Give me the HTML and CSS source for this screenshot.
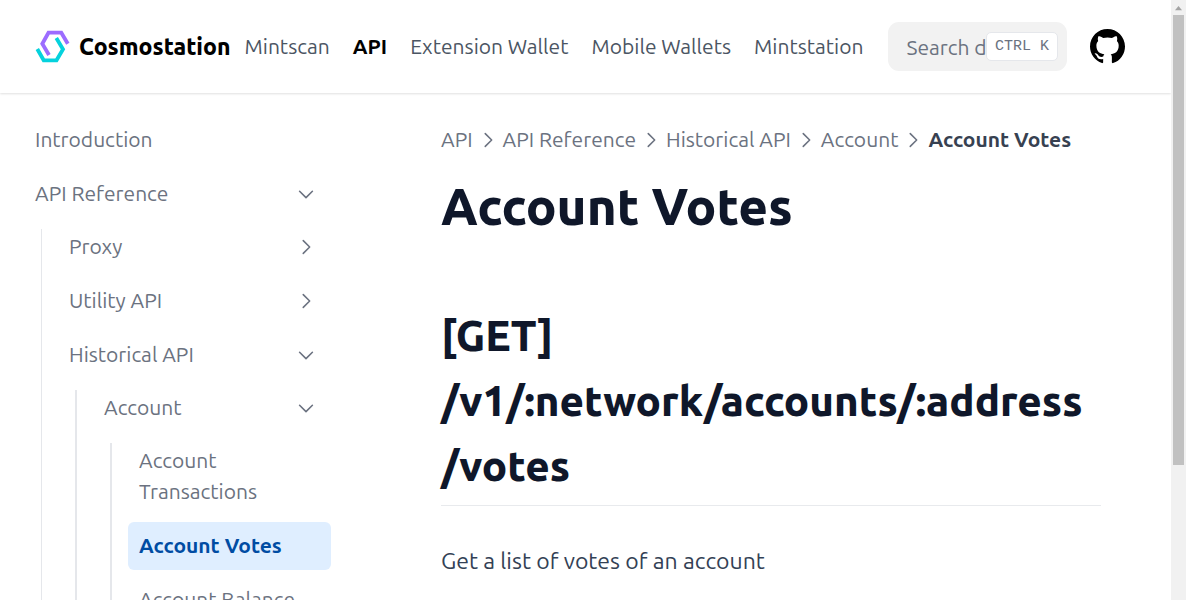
FILE: index.html
```html
<!DOCTYPE html>
<html lang="en">
<head>
<meta charset="utf-8">
<title>Account Votes – Cosmostation</title>
<link rel="stylesheet" href="styles.css">
</head>
<body>
<svg class="defs" aria-hidden="true">
  <symbol id="chevron" viewBox="0 0 24 24"><path d="M9 5l7 7-7 7" fill="none" stroke="currentColor" stroke-width="1.700" stroke-linecap="round" stroke-linejoin="round"/></symbol>
</svg>
<div class="page">
  <header class="header">
    <a class="brand" href="#">
      <svg class="brand-mark" viewBox="0 0 36 34" aria-hidden="true">
        <g fill="none" stroke-width="3.800">
          <path d="M32.800 13.700L26.300 2.700H13.500L7.300 13.700L14 25" stroke="#9c6cff"/>
          <path d="M2.300 19L8.700 30.300H21.500L28 19.200L21.300 8" stroke="#05d2dd"/>
        </g>
      </svg>
      <span>Cosmostation</span>
    </a>
    <nav class="nav" aria-label="Main">
      <a href="#">Mintscan</a>
      <a href="#" class="current" aria-current="true">API</a>
      <a href="#">Extension Wallet</a>
      <a href="#">Mobile Wallets</a>
      <a href="#">Mintstation</a>
    </nav>
    <div class="search">
      <input class="search-input" type="search" placeholder="Search documentation…" aria-label="Search documentation">
      <kbd class="search-key">CTRL K</kbd>
    </div>
    <a class="github" href="#" aria-label="GitHub">
      <svg viewBox="0 0 16 16" aria-hidden="true"><path d="M8 0C3.580 0 0 3.580 0 8c0 3.540 2.290 6.530 5.470 7.590.4.070.55-.17.55-.38 0-.19-.01-.82-.01-1.490-2.010.37-2.530-.49-2.690-.94-.09-.23-.48-.94-.82-1.130-.28-.15-.68-.52-.01-.53.63-.01 1.080.58 1.230.82.72 1.210 1.870.87 2.330.66.07-.52.28-.87.51-1.070-1.780-.2-3.640-.89-3.640-3.950 0-.87.31-1.590.82-2.150-.08-.2-.36-1.020.08-2.120 0 0 .67-.21 2.200.82.64-.18 1.320-.27 2-.27s1.360.09 2 .27c1.530-1.040 2.200-.82 2.200-.82.44 1.100.16 1.920.08 2.120.51.56.82 1.270.82 2.150 0 3.070-1.870 3.750-3.650 3.950.29.25.54.73.54 1.480 0 1.070-.01 1.930-.01 2.200 0 .21.15.46.55.38A8.010 8.010 0 0 0 16 8c0-4.420-3.580-8-8-8z"/></svg>
    </a>
  </header>
  <div class="columns">
    <aside class="sidebar">
      <ul class="menu">
        <li><a class="item" href="#">Introduction</a></li>
        <li>
          <button class="item" type="button" aria-expanded="true">API Reference<svg class="chevron open"><use href="#chevron"/></svg></button>
          <ul class="menu sub">
            <li><button class="item" type="button" aria-expanded="false">Proxy<svg class="chevron"><use href="#chevron"/></svg></button></li>
            <li><button class="item" type="button" aria-expanded="false">Utility API<svg class="chevron"><use href="#chevron"/></svg></button></li>
            <li>
              <button class="item" type="button" aria-expanded="true">Historical API<svg class="chevron open"><use href="#chevron"/></svg></button>
              <ul class="menu sub deep">
                <li>
                  <button class="item" type="button" aria-expanded="true">Account<svg class="chevron open"><use href="#chevron"/></svg></button>
                  <ul class="menu sub deep">
                    <li><a class="item" href="#">Account Transactions</a></li>
                    <li><a class="item active" href="#" aria-current="page">Account Votes</a></li>
                    <li><a class="item" href="#">Account Balance</a></li>
                  </ul>
                </li>
              </ul>
            </li>
          </ul>
        </li>
      </ul>
    </aside>
    <main class="content">
      <nav class="crumbs" aria-label="Breadcrumb">
        <a href="#">API</a>
        <svg class="chevron"><use href="#chevron"/></svg>
        <a href="#">API Reference</a>
        <svg class="chevron"><use href="#chevron"/></svg>
        <a href="#">Historical API</a>
        <svg class="chevron"><use href="#chevron"/></svg>
        <a href="#">Account</a>
        <svg class="chevron"><use href="#chevron"/></svg>
        <span class="here">Account Votes</span>
      </nav>
      <h1>Account Votes</h1>
      <h2>[GET] <span class="path">/v1/:network/accounts/:address<wbr>/votes</span></h2>
      <p>Get a list of votes of an account</p>
    </main>
  </div>
</div>
<div class="scrollbar" aria-hidden="true"><div class="arrow"></div><div class="thumb"></div></div>
</body>
</html>
```
FILE: styles.css
```css
* { box-sizing: border-box; }

body {
  margin: 0;
  height: 100vh;
  overflow: hidden;
  display: grid;
  grid-template-columns: minmax(0, 1fr) 15px;
  background: #fff;
  color: #334155;
  font: 21px/31px Ubuntu, "Noto Sans", sans-serif;
}

a { color: inherit; text-decoration: none; }

.defs { display: none; }

.page { height: 100vh; overflow: hidden; }

.header {
  display: flex;
  align-items: center;
  height: 93px;
  padding: 0 46px 0 35px;
  box-shadow: 0 1px 2px rgba(0, 0, 0, .12);
  white-space: nowrap;
}

.brand {
  display: flex;
  align-items: center;
  gap: 8px;
  color: #000;
  font-size: 23px;
  font-weight: 800;
}
.brand-mark { width: 36px; height: 34px; }

.nav { display: flex; gap: 23px; margin-left: 14px; color: #4b5563; }
.nav .current { color: #000; font-weight: 700; }

.search {
  position: relative;
  flex: 1;
  min-width: 0;
  margin-left: 25px;
}
.search-input {
  display: block;
  width: 100%;
  height: 49px;
  padding: 0 18px;
  border: 0;
  border-radius: 11px;
  background: #f2f2f2;
  color: #4b5563;
  font: inherit;
}
.search-input::placeholder { color: #6b7280; opacity: 1; }
.search-key {
  position: absolute;
  top: 10px;
  right: 9px;
  height: 29px;
  padding: 0 8px;
  border: 1px solid #e5e7eb;
  border-radius: 5px;
  background: #fff;
  color: #6b7280;
  font: 15px/27px "Liberation Mono", monospace;
}

.github { margin-left: 23px; }
.github svg { display: block; width: 35px; height: 35px; }

.columns {
  display: grid;
  grid-template-columns: 331px minmax(0, 1fr);
  column-gap: 110px;
  padding-right: 70px;
}

.sidebar { padding: 23px 0 0 24px; }
.menu {
  display: flex;
  flex-direction: column;
  gap: 6px;
  margin: 0;
  padding: 0;
  list-style: none;
}
.sub { position: relative; margin-top: 5px; padding-left: 34px; }
.sub::before {
  content: "";
  position: absolute;
  top: 6px;
  bottom: 0;
  left: 17px;
  width: 1px;
  background: #e5e7eb;
}
.deep { padding-left: 35px; }
.deep::before { width: 2px; }

.item {
  display: flex;
  align-items: center;
  justify-content: space-between;
  width: 100%;
  padding: 8px 14px 9px 11px;
  border: 0;
  border-radius: 6px;
  background: none;
  color: #6b7280;
  font: inherit;
  text-align: left;
}
.active { background: #dfeeff; color: #004ca3; font-weight: 700; }

.chevron { flex: none; width: 22px; height: 22px; }
.open { transform: rotate(90deg); }

.content { padding-top: 31px; }
.crumbs {
  display: flex;
  align-items: center;
  gap: 4px;
  color: #6b7280;
  white-space: nowrap;
}
.here { color: #374151; font-weight: 600; }

h1 {
  margin: 14px 0 0;
  color: #0f172a;
  font-size: 51px;
  font-weight: 800;
  line-height: 74px;
}
h2 {
  margin: 60px 0 0;
  padding-bottom: 7px;
  border-bottom: 1px solid #e8eaed;
  color: #0f172a;
  font-size: 42px;
  font-weight: 800;
  line-height: 65px;
}
p { margin: 37px 0 0; font-size: 23px; line-height: 36px; }

.scrollbar { background: #f1f1f1; padding: 0 2px; }
.arrow {
  width: 7px;
  height: 15px;
  margin: 0 auto;
  background: #a3a3a3;
  clip-path: polygon(50% 40%, 100% 68%, 0 68%);
}
.thumb { height: 75vh; background: #c1c1c1; }
```
